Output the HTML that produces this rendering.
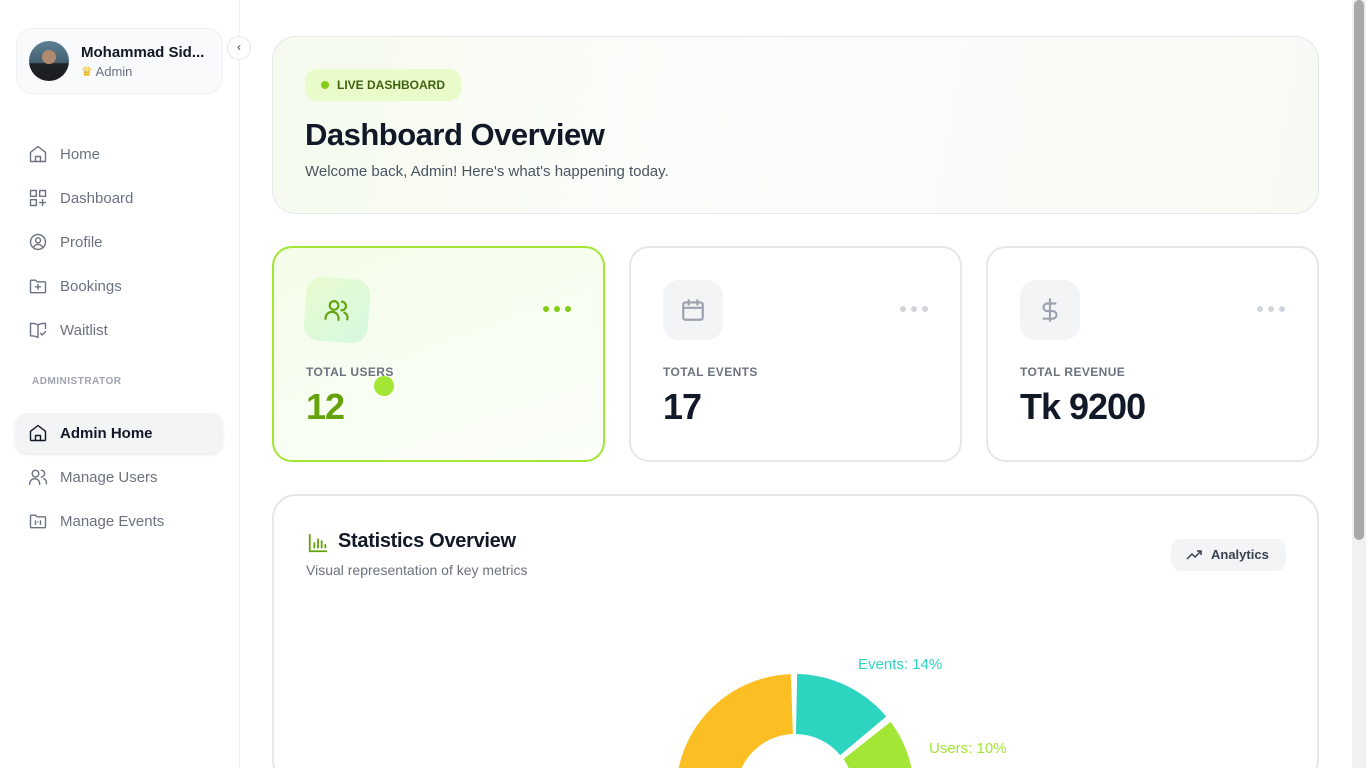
<!DOCTYPE html>
<html><head><meta charset="utf-8"><style>
*{box-sizing:border-box;margin:0;padding:0}
html,body{width:1366px;height:768px;overflow:hidden}
body{background:#fff;font-family:"Liberation Sans",sans-serif;position:relative;color:#111827}
.sb{position:absolute;left:0;top:0;width:240px;height:768px;border-right:1px solid #eef0f3;background:#fff}
.prof{position:absolute;left:16px;top:28px;width:207px;height:66px;border:1px solid #eef0f3;border-radius:16px;background:#f9fafb}
.av{position:absolute;left:12px;top:12px;width:40px;height:40px;border-radius:50%;background:radial-gradient(circle at 50% 40%,#b08a70 0 22%,transparent 23%),linear-gradient(180deg,#5d7f95 0%,#44606f 55%,#1f2428 56%,#1a1d20 100%)}
.pn{position:absolute;left:64px;top:15px;font-weight:bold;font-size:15px;color:#111827}
.pr{position:absolute;left:64px;top:35px;font-size:13px;color:#6b7280}
.tog{position:absolute;left:227px;top:36px;width:24px;height:24px;border-radius:50%;border:1px solid #e5e7eb;background:#fff;font-size:12px;text-align:center;line-height:21px;color:#374151}
.nav{position:absolute;left:28px;font-size:15px;color:#6b7280;display:flex;align-items:center}
.nav svg{width:20px;height:20px;margin-right:12px;fill:none;stroke:#6b7280;stroke-width:1.7;stroke-linecap:round;stroke-linejoin:round}
.adm{position:absolute;left:32px;top:376px;font-size:10px;font-weight:bold;color:#9ca3af;letter-spacing:.5px}
.act{position:absolute;left:15px;top:413px;width:208px;height:40px;border-radius:12px;background:#f3f4f6;box-shadow:0 2px 3px rgba(0,0,0,.08)}
.hero{position:absolute;left:272px;top:36px;width:1047px;height:178px;border:1px solid #e5e7eb;border-radius:24px;background:linear-gradient(100deg,#f5fbee 0%,#fbfcfb 45%,#f7faf3 100%)}
.badge{position:absolute;left:32px;top:32px;width:156px;height:32px;border-radius:12px;background:#e9fbc9;font-size:12px;font-weight:bold;color:#3f6212;line-height:32px;padding-left:32px}
.badge:before{content:"";position:absolute;left:16px;top:12px;width:8px;height:8px;border-radius:50%;background:#84cc16}
.h1{position:absolute;left:32px;top:80px;font-size:31px;font-weight:bold;color:#111827;letter-spacing:-.5px}
.sub{position:absolute;left:32px;top:126px;font-size:15px;color:#4b5563}
.card{position:absolute;top:246px;width:333px;height:216px;border:2px solid #e5e7eb;border-radius:20px;background:#fff}
.ic{position:absolute;left:32px;top:32px;width:60px;height:60px;border-radius:16px;background:#f3f4f6}
.ic svg{position:absolute;left:17px;top:17px;width:26px;height:26px;fill:none;stroke:#9ca3af;stroke-width:2;stroke-linecap:round;stroke-linejoin:round}
.dots{position:absolute;right:32px;top:58px;display:flex;gap:5px}
.dots i{width:6px;height:6px;border-radius:50%;background:#d1d5db}
.lbl{position:absolute;left:32px;top:117px;font-size:12px;font-weight:bold;color:#6b7280;letter-spacing:.4px}
.val{position:absolute;left:32px;top:138px;font-size:36px;font-weight:bold;color:#111827;letter-spacing:-1px}
.stat{position:absolute;left:272px;top:494px;width:1047px;height:290px;border:2px solid #e5e7eb;border-radius:24px;background:#fff}
.an{position:absolute;left:897px;top:43px;width:115px;height:32px;border-radius:10px;background:#f3f4f6;font-size:13px;font-weight:bold;color:#374151;line-height:32px;padding-left:40px}
.scr{position:absolute;left:1352px;top:0;width:14px;height:768px;background:#f1f1f1}
.thumb{position:absolute;left:1354px;top:0;width:10px;height:540px;border-radius:5px;background:#a8a8a8}
</style></head><body>
<div class="sb">
 <div class="prof"><div class="av"></div><div class="pn">Mohammad Sid...</div><div class="pr"><span style="color:#eab308">♛</span> Admin</div></div>
 <div class="nav" style="top:144px"><svg viewBox="0 0 24 24"><path d="M3 10l9-7 9 7v10a1 1 0 0 1-1 1H4a1 1 0 0 1-1-1z"/><path d="M9 21v-6h6v6"/></svg>Home</div>
 <div class="nav" style="top:188px"><svg viewBox="0 0 24 24"><rect x="3" y="3" width="7" height="7"/><rect x="14" y="3" width="7" height="7"/><rect x="3" y="14" width="7" height="7"/><path d="M17.5 14v7M14 17.5h7"/></svg>Dashboard</div>
 <div class="nav" style="top:232px"><svg viewBox="0 0 24 24"><circle cx="12" cy="12" r="9"/><circle cx="12" cy="10" r="3"/><path d="M6.5 18.5a6 6 0 0 1 11 0"/></svg>Profile</div>
 <div class="nav" style="top:276px"><svg viewBox="0 0 24 24"><path d="M3 6a1 1 0 0 1 1-1h5l2 2h9a1 1 0 0 1 1 1v11a1 1 0 0 1-1 1H4a1 1 0 0 1-1-1z"/><path d="M12 10v6M9 13h6"/></svg>Bookings</div>
 <div class="nav" style="top:320px"><svg viewBox="0 0 24 24"><path d="M12 6v15M12 6c-2-1.5-5-2-9-2v15c4 0 7 .5 9 2M12 6c2-1.5 5-2 9-2v6"/><path d="M15 16l2 2 4-4"/></svg>Waitlist</div>
 <div class="adm">ADMINISTRATOR</div>
 <div class="act"></div>
 <div class="nav" style="top:423px;color:#111827;font-weight:bold"><svg viewBox="0 0 24 24" style="stroke:#111827"><path d="M3 10l9-7 9 7v10a1 1 0 0 1-1 1H4a1 1 0 0 1-1-1z"/><path d="M9 21v-6h6v6"/></svg>Admin Home</div>
 <div class="nav" style="top:467px"><svg viewBox="0 0 24 24"><circle cx="9" cy="8" r="4"/><path d="M2 21v-1a6 6 0 0 1 12 0v1M16 4a4 4 0 0 1 0 8M19 14a5 5 0 0 1 3 6"/></svg>Manage Users</div>
 <div class="nav" style="top:511px"><svg viewBox="0 0 24 24"><path d="M3 6a1 1 0 0 1 1-1h5l2 2h9a1 1 0 0 1 1 1v11a1 1 0 0 1-1 1H4a1 1 0 0 1-1-1z"/><path d="M9 12v4M12 13h0M15 12v4"/></svg>Manage Events</div>
</div>
<div class="tog">‹</div>
<div class="hero"><div class="badge">LIVE DASHBOARD</div><div class="h1">Dashboard Overview</div><div class="sub">Welcome back, Admin! Here's what's happening today.</div></div>
<div class="card" style="left:272px;border-color:#a3e635;background:linear-gradient(160deg,#f4fde8,#fbfefa)">
 <div class="ic" style="transform:rotate(4deg);background:linear-gradient(135deg,#e8fbd0,#d6f8e0);width:64px;height:64px;left:31px;top:30px"><svg viewBox="0 0 24 24" style="stroke:#65a30d;left:19px;top:19px"><circle cx="9" cy="8" r="4"/><path d="M2 21v-1a6 6 0 0 1 12 0v1M16 4a4 4 0 0 1 0 8M19 14a5 5 0 0 1 3 6"/></svg></div>
 <div class="dots"><i style="background:#84cc16"></i><i style="background:#84cc16"></i><i style="background:#84cc16"></i></div>
 <div class="lbl">TOTAL USERS</div>
 <div style="position:absolute;left:100px;top:128px;width:20px;height:20px;border-radius:50%;background:#a3e635"></div>
 <div class="val" style="color:#65a30d">12</div>
</div>
<div class="card" style="left:629px"><div class="ic"><svg viewBox="0 0 24 24"><rect x="3" y="5" width="18" height="16" rx="2"/><path d="M3 10h18M8 3v4M16 3v4"/></svg></div><div class="dots"><i></i><i></i><i></i></div><div class="lbl">TOTAL EVENTS</div><div class="val">17</div></div>
<div class="card" style="left:986px"><div class="ic"><svg viewBox="0 0 24 24"><path d="M12 2v20M17 6H9.5a3.5 3.5 0 0 0 0 7h5a3.5 3.5 0 0 1 0 7H6"/></svg></div><div class="dots"><i></i><i></i><i></i></div><div class="lbl">TOTAL REVENUE</div><div class="val">Tk 9200</div></div>
<div class="stat">
 <svg style="position:absolute;left:33px;top:36px" width="22" height="22" viewBox="0 0 24 24" fill="none" stroke="#65a30d" stroke-width="2" stroke-linecap="round"><path d="M3 3v18h18M8 17v-5M12 17V8M16 17v-7M20 17v-3"/></svg>
 <div style="position:absolute;left:64px;top:34px;font-size:20px;font-weight:bold;color:#111827;letter-spacing:-.3px">Statistics Overview</div>
 <div style="position:absolute;left:32px;top:66px;font-size:14px;color:#6b7280">Visual representation of key metrics</div>
 <div class="an"><svg style="position:absolute;left:15px;top:10px" width="16" height="12" viewBox="0 0 16 12" fill="none" stroke="#374151" stroke-width="1.5"><path d="M1 10l5-5 3 3 6-6M11 2h4v4"/></svg>Analytics</div>
</div>
<svg style="position:absolute;left:0;top:0" width="1352" height="768">
 <path d="M797.1,674 A119,119 0 0 1 886.2,716.5 L840.2,755.1 A59,59 0 0 0 796,734 Z" fill="#2dd4bf"/>
 <path d="M890.5,721.8 A119,119 0 0 1 913.7,784.7 L853.9,788.9 A59,59 0 0 0 843.5,759 Z" fill="#a3e635"/>
 <path d="M913.9,788.8 A119,119 0 1 1 790.8,674.1 L792.9,734 A59,59 0 1 0 854,790.9 Z" fill="#fbbf24"/>
 <text x="858" y="669" font-family="Liberation Sans" font-size="15" fill="#2dd4bf">Events: 14%</text>
 <text x="929" y="753" font-family="Liberation Sans" font-size="15" fill="#a3e635">Users: 10%</text>
</svg>
<div class="scr"></div><div class="thumb"></div>
</body></html>
